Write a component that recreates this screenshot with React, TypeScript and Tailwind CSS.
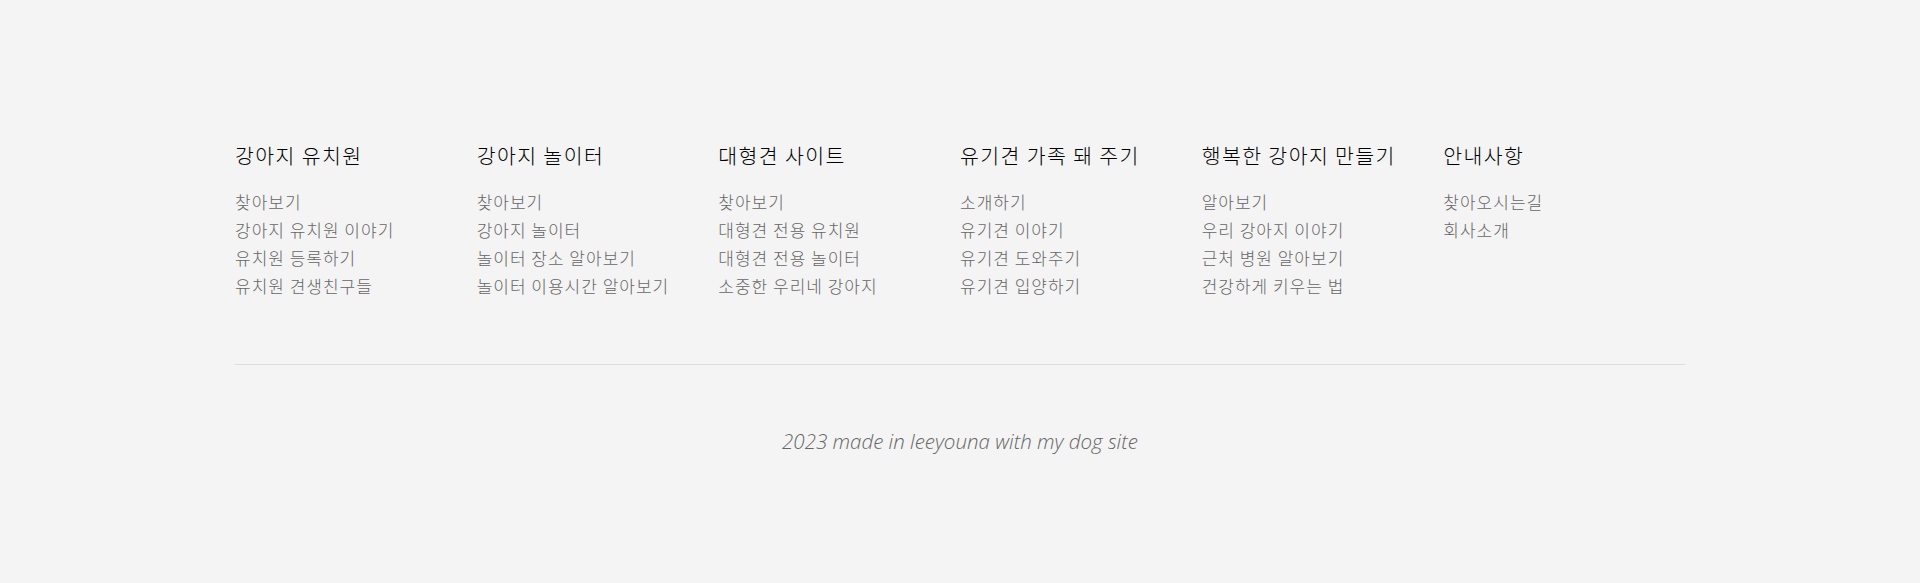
const menus = [
  { title: '강아지 유치원', links: ['찾아보기', '강아지 유치원 이야기', '유치원 등록하기', '유치원 견생친구들'] },
  { title: '강아지 놀이터', links: ['찾아보기', '강아지 놀이터', '놀이터 장소 알아보기', '놀이터 이용시간 알아보기'] },
  { title: '대형견 사이트', links: ['찾아보기', '대형견 전용 유치원', '대형견 전용 놀이터', '소중한 우리네 강아지'] },
  { title: '유기견 가족 돼 주기', links: ['소개하기', '유기견 이야기', '유기견 도와주기', '유기견 입양하기'] },
  { title: '행복한 강아지 만들기', links: ['알아보기', '우리 강아지 이야기', '근처 병원 알아보기', '건강하게 키우는 법'] },
  { title: '안내사항', links: ['찾아오시는길', '회사소개'] },
];

const App = () => {
  return (
    <footer
      className="w-full min-h-[583px] bg-[#f4f4f4] pt-[141px]"
      style={{ fontFamily: '"Noto Sans CJK KR", "Noto Sans", sans-serif' }}
    >
      <div className="mx-auto w-[1450px]">
        {/* Menu columns */}
        <div className="grid grid-cols-6">
          {menus.map((menu) => (
            <div key={menu.title} className="flex flex-col">
              <h3 className="text-[20.5px] leading-[28px] tracking-[1.4px] text-black font-light">{menu.title}</h3>
              <ul className="mt-[19px] flex flex-col">
                {menu.links.map((link) => (
                  <li key={link} className="text-[17px] leading-[28px] tracking-[1px] text-[#666] font-light">
                    <a href="#">{link}</a>
                  </li>
                ))}
              </ul>
            </div>
          ))}
        </div>

        <div className="mt-[64px] border-t border-[#dcdcdc]" />

        <p
          className="mt-[62px] text-center text-[20.5px] leading-[28px] italic font-light text-[#666]"
          style={{ fontFamily: '"Open Sans", "Noto Sans", sans-serif' }}
        >
          2023 made in leeyouna with my dog site
        </p>
      </div>
    </footer>
  );
};

export default App;
